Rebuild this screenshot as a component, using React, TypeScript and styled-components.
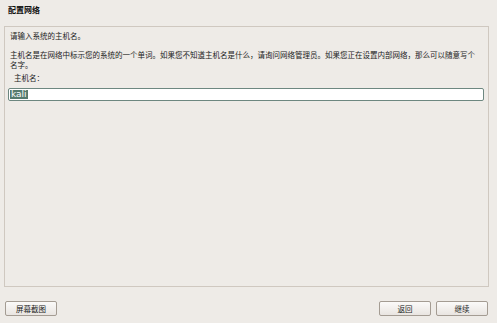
import styled, { createGlobalStyle } from "styled-components";

const GlobalStyle = createGlobalStyle`
  html, body {
    margin: 0;
    padding: 0;
    background: #eeebe7;
  }
  body {
    font-family: "Noto Sans CJK SC", "DejaVu Sans", sans-serif;
    color: #222;
  }
`;

export default function App() {
  return (
    <>
      <GlobalStyle />
      <Window>
        <Header>配置网络</Header>
        <Panel>
          <Text>请输入系统的主机名。</Text>
          <Text top={9}>
            主机名是在网络中标示您的系统的一个单词。如果您不知道主机名是什么，请询问网络管理员。如果您正在设置内部网络，那么可以随意写个名字。
          </Text>
          <Label>主机名：</Label>
          <Input>
            <Selected>kali</Selected>
          </Input>
        </Panel>
        <Footer>
          <Button>屏幕截图</Button>
          <ButtonGroup>
            <Button>返回</Button>
            <Button>继续</Button>
          </ButtonGroup>
        </Footer>
      </Window>
    </>
  );
}

const Window = styled.div`
  height: 323px;
  display: flex;
  flex-direction: column;
  background: #eeebe7;
`;

const Header = styled.div`
  height: 26px;
  box-sizing: border-box;
  padding: 5px 0 0 8px;
  font-size: 8px;
  line-height: 10px;
  font-weight: bold;
  color: #111;
`;

const Panel = styled.div`
  flex: 1;
  margin: 0 8px 0 4px;
  border: 1px solid #cfc8c0;
  padding: 4px 4px 0 3px;
  display: flex;
  flex-direction: column;
`;

const Text = styled.div<{ top?: number }>`
  margin: ${({ top }) => top || 0}px 5px 0 2px;
  font-size: 7.5px;
  line-height: 10px;
`;

const Label = styled.div`
  margin: 3px 0 0 6px;
  font-size: 7.5px;
  line-height: 10px;
`;

const Input = styled.div`
  margin-top: 5px;
  height: 13px;
  box-sizing: border-box;
  border: 1px solid #6d8780;
  border-radius: 2px;
  background: #fff;
  padding: 1px 0 0 1px;
  display: flex;
  align-items: flex-start;
`;

const Selected = styled.span`
  background: #557a6e;
  color: #fff;
  font-family: "DejaVu Sans", sans-serif;
  font-size: 9px;
  line-height: 9px;
  padding: 0 1px;
`;

const Footer = styled.div`
  height: 36px;
  box-sizing: border-box;
  padding: 14px 9px 0 5px;
  display: flex;
  justify-content: space-between;
  align-items: flex-start;
`;

const ButtonGroup = styled.div`
  display: flex;
  gap: 5px;
`;

const Button = styled.button`
  width: 52px;
  height: 15px;
  padding: 0;
  border: 1px solid #a49c93;
  border-radius: 2px;
  background: linear-gradient(#fbfaf9, #e9e5e1);
  font-family: "Noto Sans CJK SC", "DejaVu Sans", sans-serif;
  font-size: 7.5px;
  line-height: 13px;
  color: #222;
`;
